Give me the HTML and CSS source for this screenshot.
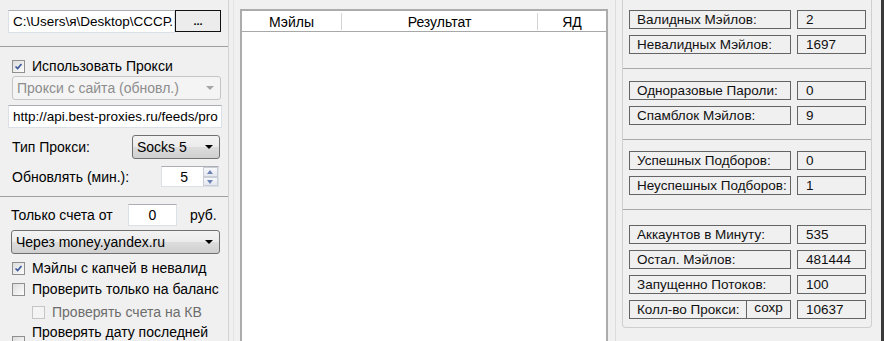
FILE: index.html
```html
<!DOCTYPE html>
<html lang="ru">
<head>
    <meta charset="UTF-8">
    <meta name="viewport" content="width=device-width, initial-scale=1.0">
    <title>Mail Checker</title>
    <link rel="stylesheet" href="styles.css">
</head>
<body>
    <div class="window">
        <div class="left">
            <div class="file-row">
                <div class="textbox file">C:\Users\я\Desktop\СССР.</div>
                <button class="browse">...</button>
            </div>
            <div class="sep"></div>

            <div class="check first">
                <span class="box checked"><svg viewBox="0 0 13 13"><path d="M3 6.5 L5.5 9 L10 3.5" /></svg></span>
                <span>Использовать Прокси</span>
            </div>
            <div class="combo disabled">Прокси с сайта (обновл.)<span class="arrow"></span></div>
            <div class="textbox url">http://api.best-proxies.ru/feeds/pro</div>

            <div class="field-row type-row">
                <span>Тип Прокси:</span>
                <div class="combo small">Socks 5<span class="arrow"></span></div>
            </div>
            <div class="field-row update-row">
                <span>Обновлять (мин.):</span>
                <div class="spinner">
                    <span class="num">5</span>
                    <span class="spin-btns">
                        <span class="spin up"></span>
                        <span class="spin down"></span>
                    </span>
                </div>
            </div>
            <div class="sep sep-two"></div>

            <div class="field-row sum-row">
                <span class="sum-label">Только счета от</span>
                <div class="textbox amount">0</div>
                <span>руб.</span>
            </div>
            <div class="combo wide">Через money.yandex.ru<span class="arrow"></span></div>

            <div class="check c1">
                <span class="box checked"><svg viewBox="0 0 13 13"><path d="M3 6.5 L5.5 9 L10 3.5" /></svg></span>
                <span>Мэйлы с капчей в невалид</span>
            </div>
            <div class="check c2">
                <span class="box"></span>
                <span>Проверить только на баланс</span>
            </div>
            <div class="check c3 sub disabled">
                <span class="box"></span>
                <span>Проверять счета на КВ</span>
            </div>
            <div class="check c4">
                <span class="box"></span>
                <span>Проверять дату последней</span>
            </div>
        </div>

        <div class="mid">
            <div class="list">
                <div class="list-head">
                    <div class="col col-mail">Мэйлы</div>
                    <div class="col col-result">Результат</div>
                    <div class="col col-yd">ЯД</div>
                </div>
            </div>
        </div>

        <div class="right">
            <div class="group">
                <div class="section s1">
                    <div class="stat"><div class="stat-label">Валидных Мэйлов:</div><div class="stat-value">2</div></div>
                    <div class="stat"><div class="stat-label">Невалидных Мэйлов:</div><div class="stat-value">1697</div></div>
                </div>
                <div class="section s2">
                    <div class="stat"><div class="stat-label">Одноразовые Пароли:</div><div class="stat-value">0</div></div>
                    <div class="stat"><div class="stat-label">Спамблок Мэйлов:</div><div class="stat-value">9</div></div>
                </div>
                <div class="section s3">
                    <div class="stat"><div class="stat-label">Успешных Подборов:</div><div class="stat-value">0</div></div>
                    <div class="stat"><div class="stat-label">Неуспешных Подборов:</div><div class="stat-value">1</div></div>
                </div>
                <div class="section s4">
                    <div class="stat"><div class="stat-label">Аккаунтов в Минуту:</div><div class="stat-value">535</div></div>
                    <div class="stat"><div class="stat-label">Остал. Мэйлов:</div><div class="stat-value">481444</div></div>
                    <div class="stat"><div class="stat-label">Запущенно Потоков:</div><div class="stat-value">100</div></div>
                    <div class="stat">
                        <div class="stat-label short">Колл-во Прокси:</div>
                        <div class="stat-save">сохр</div>
                        <div class="stat-value">10637</div>
                    </div>
                </div>
            </div>
            <div class="edge"></div>
        </div>
    </div>
</body>
</html>
```

FILE: styles.css
```css
body {
    margin: 0;
    background-color: #f0f0f0;
    font-family: "Liberation Sans", Arial, sans-serif;
    font-size: 13.5px;
    color: #000;
    overflow: hidden;
}

.window {
    display: flex;
    width: 884px;
    height: 341px;
    overflow: hidden;
}

/* left settings panel */
.left {
    width: 228px;
    flex-shrink: 0;
    border-right: 1px solid #d2d2d2;
    padding-top: 10px;
    font-size: 14px;
}

.file-row {
    display: flex;
    margin-left: 8px;
    height: 23px;
}

.textbox {
    box-sizing: border-box;
    height: 23px;
    background: #fff;
    border: 1px solid #dbdfe6;
    border-top-color: #abadb3;
    padding: 0 4px;
    line-height: 21px;
    white-space: nowrap;
    overflow: hidden;
}

.textbox.file {
    width: 167px;
    font-size: 13.5px;
}

.browse {
    box-sizing: border-box;
    width: 46px;
    height: 22px;
    border: 1px solid #111;
    background: #ececec;
    font: bold 11px "Liberation Sans", Arial, sans-serif;
    padding: 0;
    line-height: 14px;
}

.sep {
    height: 1px;
    background: #a0a0a0;
    margin-top: 13px;
}

.sep-two {
    margin-top: 9px;
}

.check {
    display: flex;
    align-items: center;
    height: 16px;
    line-height: 16px;
    margin-left: 12px;
    white-space: nowrap;
}

.check .box {
    box-sizing: border-box;
    width: 13px;
    height: 13px;
    border: 1px solid #8e8f8f;
    background: linear-gradient(135deg, #dcdcdc, #fdfdfd);
    margin-right: 7px;
    flex-shrink: 0;
}

.check .box svg {
    display: block;
    width: 11px;
    height: 11px;
}

.check .box path {
    fill: none;
    stroke: #3d5a9c;
    stroke-width: 2;
}

.check.first { margin-top: 11px; }
.check.c1 { margin-top: 6px; }
.check.c2 { margin-top: 5px; }
.check.c3 { margin-top: 7px; }

.check.c4 {
    margin-top: 4px;
    align-items: flex-start;
}

.check.c4 .box {
    margin-top: 12px;
}

.check.sub {
    margin-left: 32px;
}

.check.disabled {
    color: #6d6d6d;
}

.check.disabled .box {
    border-color: #c5c5c5;
    background: #f4f4f4;
}

.combo {
    box-sizing: border-box;
    position: relative;
    height: 24px;
    line-height: 22px;
    padding-left: 4px;
    border: 1px solid #707070;
    border-radius: 3px;
    background: linear-gradient(#f3f3f3, #ebebeb 50%, #dddddd 50%, #cfcfcf);
    white-space: nowrap;
}

.combo .arrow {
    position: absolute;
    right: 6px;
    top: 9px;
    border-left: 4px solid transparent;
    border-right: 4px solid transparent;
    border-top: 4px solid #000;
}

.combo.disabled {
    margin: 2px 0 0 12px;
    width: 209px;
    border-color: #c5c5c5;
    background: #f4f4f4;
    color: #8d8d8d;
}

.combo.disabled .arrow {
    border-top-color: #a5a5a5;
}

.textbox.url {
    margin: 5px 0 0 8px;
    width: 214px;
    font-size: 13.5px;
}

.field-row {
    display: flex;
    align-items: center;
    margin-left: 12px;
    white-space: nowrap;
}

.type-row {
    margin-top: 7px;
    justify-content: space-between;
    width: 208px;
}

.combo.small {
    width: 88px;
}

.update-row {
    margin-top: 7px;
    justify-content: space-between;
    width: 207px;
}

.spinner {
    box-sizing: border-box;
    display: flex;
    align-items: center;
    width: 58px;
    height: 21px;
    background: #fff;
    border: 1px solid #dbdfe6;
    border-top-color: #abadb3;
}

.spinner .num {
    flex: 1;
    text-align: right;
    padding-right: 15px;
}

.spin-btns {
    display: flex;
    flex-direction: column;
    width: 15px;
    height: 19px;
}

.spin {
    flex: 1;
    position: relative;
    border: 1px solid #c8cdd6;
    background: linear-gradient(#f7f8fb, #e4e7ee);
}

.spin::after {
    content: "";
    position: absolute;
    left: 3px;
    border-left: 3.5px solid transparent;
    border-right: 3.5px solid transparent;
}

.spin.up::after {
    top: 2px;
    border-bottom: 4px solid #6d82b5;
}

.spin.down::after {
    top: 2px;
    border-top: 4px solid #6d82b5;
}

.sum-row {
    margin-top: 7px;
    margin-left: 11px;
}

.sum-label {
    width: 117px;
}

.textbox.amount {
    width: 49px;
    height: 22px;
    margin-right: 13px;
    text-align: center;
}

.combo.wide {
    margin: 4px 0 0 11px;
    width: 209px;
}

/* middle list */
.mid {
    margin-left: 4px;
    border-left: 1px solid #e4e4e4;
    padding: 9px 7px 0 6px;
}

.list {
    box-sizing: border-box;
    width: 368px;
    height: 360px;
    background: #fff;
    border: 2px solid #acacac;
}

.list-head {
    display: flex;
    height: 20px;
    border-bottom: 1px solid #a8a8a8;
    font-size: 14px;
}

.col {
    text-align: center;
    line-height: 18px;
    border-right: 1px solid #d4d4d4;
    margin: 2px 0 1px;
}

.col-mail { width: 99px; }
.col-result { width: 195px; }
.col-yd { flex: 1; border-right: none; }

/* right stats */
.right {
    display: flex;
    flex: 1;
    border-left: 1px solid #dcdcdc;
}

.group {
    width: 250px;
    margin-left: 6px;
    height: 328px;
    box-sizing: border-box;
    border: 1px solid #cfcfcf;
    border-top: none;
    border-radius: 0 0 4px 4px;
}

.section {
    display: flex;
    flex-direction: column;
    gap: 6px;
    padding: 12px 0 14px 6px;
    border-bottom: 1px solid #a9a9a9;
}

.section.s1 { padding-top: 10px; }
.section.s3 { padding-top: 11px; }
.section.s4 { padding-top: 15px; border-bottom: none; }

.stat {
    display: flex;
    height: 19px;
}

.stat-label,
.stat-value,
.stat-save {
    box-sizing: border-box;
    height: 19px;
    border: 1px solid #646464;
    line-height: 17px;
    color: #111;
    white-space: nowrap;
    overflow: hidden;
}

.stat-label {
    width: 162px;
    padding-left: 7px;
}

.stat-label.short {
    width: 118px;
}

.stat-save {
    width: 44px;
    border-left: none;
    text-align: center;
    line-height: 14px;
}

.stat-value {
    width: 69px;
    margin-left: 6px;
    padding-left: 8px;
}

.edge {
    margin-left: auto;
    width: 3px;
    background: #3a3a3a;
}
```
